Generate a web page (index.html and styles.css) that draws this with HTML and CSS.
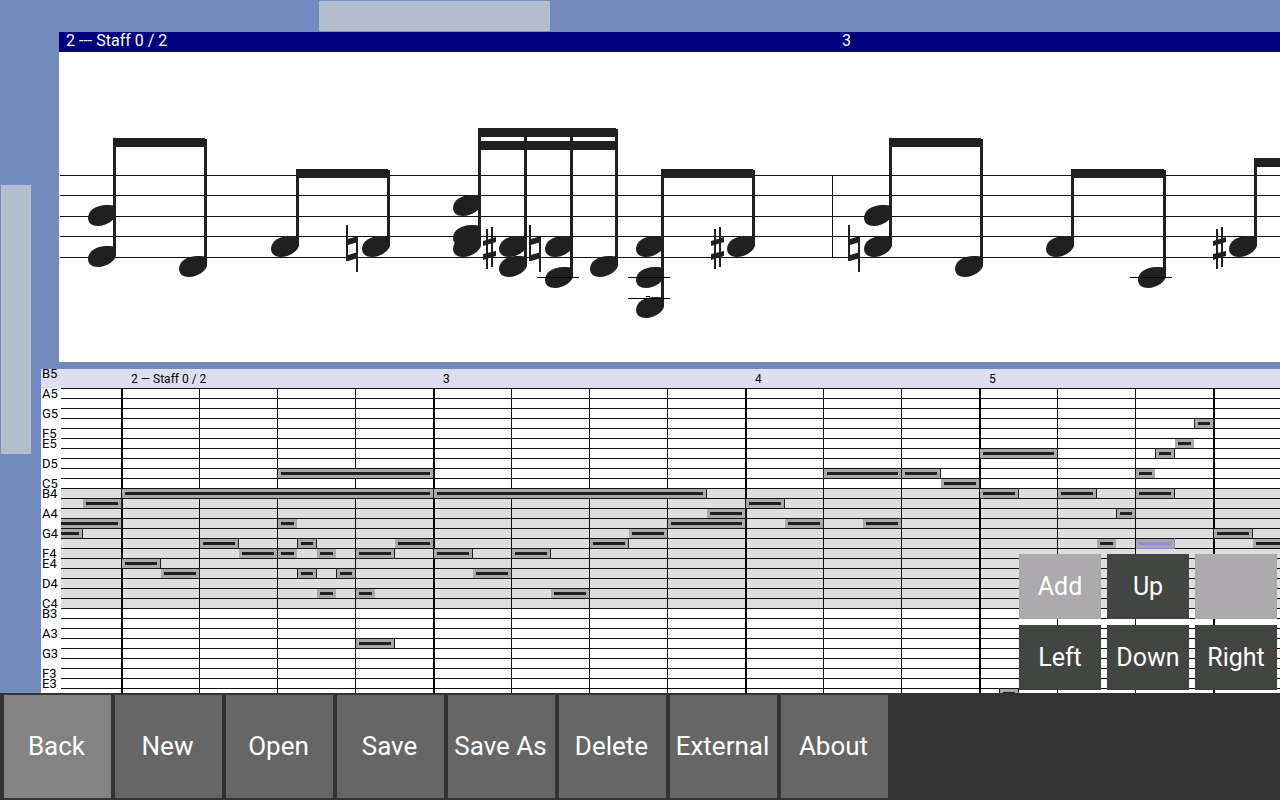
FILE: index.html
```html
<!DOCTYPE html>
<html lang="en">

<head>
  <meta charset="UTF-8">
  <meta name="viewport" content="width=device-width, initial-scale=1.0">
  <title>Score Editor</title>
  <link rel="stylesheet" href="styles.css">
</head>

<body>
  <main class="workspace">
    <input class="scroll-h" type="range" min="0" max="1000" value="304" aria-label="Scroll horizontally">
    <input class="scroll-v" type="range" min="0" max="1000" value="390" aria-label="Scroll vertically">

    <section class="score">
      <div class="score-header" id="score-header"></div>
      <svg class="score-canvas" id="score"></svg>
    </section>

    <section class="roll">
      <div class="roll-header" id="roll-header"></div>
      <ul class="keys" id="keys"></ul>
      <svg class="roll-canvas" id="roll"></svg>
    </section>

    <div class="keypad">
      <button class="pad light">Add</button>
      <button class="pad">Up</button>
      <button class="pad light" aria-label="Blank"></button>
      <button class="pad">Left</button>
      <button class="pad">Down</button>
      <button class="pad">Right</button>
    </div>
  </main>

  <nav class="toolbar">
    <button class="tool active">Back</button>
    <button class="tool">New</button>
    <button class="tool">Open</button>
    <button class="tool">Save</button>
    <button class="tool">Save As</button>
    <button class="tool">Delete</button>
    <button class="tool">External</button>
    <button class="tool">About</button>
  </nav>

  <script src="script.js"></script>
</body>

</html>
```
FILE: styles.css
```css
* {
  box-sizing: border-box;
}

body {
  margin: 0;
  height: 100vh;
  display: flex;
  flex-direction: column;
  background-color: #333333;
  font-family: Roboto, "Liberation Sans", sans-serif;
  overflow: hidden;
}

button {
  border: none;
  padding: 0;
  font-family: inherit;
  color: #FFF;
  cursor: pointer;
}

.workspace {
  position: relative;
  flex: 1;
  min-height: 0;
  display: grid;
  grid-template-columns: 41px 1fr;
  grid-template-rows: 32px auto 1fr;
  background-color: #728ABC;
}

/* scrollbars */
.scroll-h,
.scroll-v {
  appearance: none;
  margin: 0;
  background: transparent;
}

.scroll-h {
  grid-column: 1 / 3;
  width: 100%;
  height: 32px;
}

.scroll-v {
  grid-row: 2 / 4;
  writing-mode: vertical-lr;
  width: 32px;
  height: 100%;
}

.scroll-h::-webkit-slider-thumb {
  appearance: none;
  width: 231px;
  height: 30px;
  background-color: #B4BDCE;
}

.scroll-v::-webkit-slider-thumb {
  appearance: none;
  width: 30px;
  height: 269px;
  background-color: #B4BDCE;
}

/* staff view */
.score {
  margin-left: 18px;
  min-width: 0;
  background-color: #FFF;
}

.score-header {
  display: flex;
  height: 20px;
  padding-left: 7px;
  line-height: 18px;
  font-size: 16px;
  color: #FFF;
  background-color: #000080;
  overflow: hidden;
}

.score-canvas {
  display: block;
  width: 100%;
  height: 310px;
}

.measure {
  flex: none;
  white-space: pre;
}

/* piano roll */
.roll {
  margin-top: 7px;
  min-width: 0;
  min-height: 0;
  display: grid;
  grid-template-columns: 20px 1fr;
  grid-template-rows: 19px 1fr;
  background-color: #FFF;
  overflow: hidden;
}

.roll-header {
  grid-column: 1 / 3;
  grid-row: 1;
  display: flex;
  padding-left: 90px;
  line-height: 20px;
  font-size: 12px;
  color: #000;
  background-color: #DEDFEE;
  overflow: hidden;
}

.keys {
  grid-column: 1;
  grid-row: 1 / 3;
  min-height: 0;
  margin: 0;
  padding: 0 0 0 1px;
  list-style: none;
  font-size: 13px;
  line-height: 10px;
}

.keys li {
  height: 10px;
}

.roll-canvas {
  grid-column: 2;
  grid-row: 2;
  display: block;
  width: 100%;
  height: 100%;
}

.ink {
  fill: #202020;
}

.line {
  fill: #101010;
}

.bar {
  fill: #000;
}

.octave {
  fill: #DEDEDE;
}

.note {
  fill: #ABAAAB;
}

.selected .ink {
  fill: #8C8CD0;
}

/* keypad over the roll */
.keypad {
  position: absolute;
  right: 3px;
  bottom: 3px;
  display: grid;
  grid-template-columns: repeat(3, 82px);
  grid-auto-rows: 65px;
  gap: 6px;
}

.pad {
  font-size: 25px;
  background-color: #434542;
}

.pad.light {
  background-color: #ACAAAC;
}

.toolbar {
  display: flex;
  gap: 4px;
  padding: 2px 4px;
  background-color: #333333;
}

.tool {
  width: 107px;
  height: 103px;
  padding: 0 2px 2px 0;
  font-size: 26px;
  background-color: #666666;
}

.tool.active {
  background-color: #838383;
}
```
FILE: script.js
```js
const SVG = 'http://www.w3.org/2000/svg';

function add(parent, tag, attrs) {
  const el = document.createElementNS(SVG, tag);
  for (const name in attrs) el.setAttribute(name, attrs[name]);
  parent.appendChild(el);
  return el;
}

function rect(parent, cls, x, y, width, height) {
  return add(parent, 'rect', { class: cls, x: x, y: y, width: width, height: height });
}

function measures(id, list) {
  const header = document.getElementById(id);
  list.forEach(([text, width]) => {
    const span = document.createElement('span');
    span.className = 'measure';
    span.textContent = text;
    span.style.width = width + 'px';
    header.appendChild(span);
  });
}

measures('score-header', [['2 --- Staff 0 / 2', 776], ['3', 776]]);
measures('roll-header', [['2 — Staff 0 / 2', 312], ['3', 312], ['4', 234], ['5', 234]]);

// ---- staff ----
const score = document.getElementById('score');

const HEAD = 'M-25 3C-25 -5 -16 -10 -7 -10C-3 -10 1 -10 3 -9V-1C3 4 -6 11 -15 11C-21 11 -25 8 -25 3Z';
const NATURAL = 'M-41 -21h2v36h-2ZM-31 -9h2v35h-2ZM-39 -7L-29 -10v6L-39 -1ZM-39 9L-29 6v6L-39 15Z';
const SHARP = 'M-38 -17h2v40h-2ZM-33 -19h2v40h-2ZM-41 -5L-28 -9v5L-41 0ZM-41 8L-28 5v5L-41 14Z';

// stems: [x, head positions, accidental]
const groups = [
  { beams: [86], stems: [[54, [163, 204]], [145, [214]]] },
  { beams: [117], stems: [[237, [194]], [328, [194], NATURAL]] },
  { beams: [76, 89], stems: [[419, [153, 183, 194]], [465, [194, 214], SHARP], [511, [194, 225], NATURAL], [556, [214]]] },
  { beams: [117], stems: [[602, [194, 225, 255]], [693, [194], SHARP]] },
  { beams: [86], stems: [[830, [163, 194], NATURAL], [921, [214]]] },
  { beams: [117], stems: [[1012, [194]], [1104, [225]]] },
  { beams: [106], stems: [[1195, [194], SHARP], [1286, [214]]] }
];

[123, 143, 164, 184, 205].forEach(y => rect(score, 'line', 1, y, '100%', 1));
rect(score, 'line', 773, 123, 1, 83);

groups.forEach(group => {
  const first = group.stems[0][0];
  const last = group.stems[group.stems.length - 1][0];
  group.beams.forEach(y => rect(score, 'ink', first, y, last - first + 1, 9));

  group.stems.forEach(([x, heads, accidental]) => {
    const top = group.beams[0] + (x === first ? 0 : 1);
    rect(score, 'ink', x, top, 3, Math.max(...heads) - top);
    heads.forEach(y => {
      add(score, 'path', { class: 'ink', d: HEAD, transform: `translate(${x} ${y})` });
    });
    if (accidental) {
      add(score, 'path', { class: 'ink', d: accidental, transform: `translate(${x} 194)` });
    }
    // ledger lines
    const lowest = Math.max(...heads);
    if (lowest >= 225) rect(score, 'bar', x - 33, 225, 42, 1);
    if (lowest >= 246) {
      rect(score, 'bar', x - 33, 246, 42, 1);
      rect(score, 'bar', x - 15, 244, 4, 1);
    }
  });
});

// ---- piano roll ----
const roll = document.getElementById('roll');
const keys = document.getElementById('keys');
const ROW = 10;
const BEAT = 78;
const START = 60;

const names = ['B', '', 'A', '', 'G', '', 'F', 'E', '', 'D', '', 'C'];
for (let i = 0; i < 32; i++) {
  const li = document.createElement('li');
  const name = names[i % 12];
  li.textContent = name ? name + (5 - Math.floor(i / 12)) : '';
  keys.appendChild(li);
}

rect(roll, 'octave', 0, 10 * ROW, '100%', 12 * ROW);
for (let i = 0; i < 34; i++) rect(roll, 'line', 0, i * ROW, '100%', 1);
const bars = [0, 4, 8, 11, 14];
for (let i = 0; i < 16; i++) {
  const isBar = bars.includes(i);
  rect(roll, isBar ? 'bar' : 'line', START + i * BEAT, 0, isBar ? 2 : 1, '100%');
}

// [row, first sixteenth, last sixteenth]
const notes = [
  [11, -2, 0], [13, -8, 0], [14, -8, -2],
  [10, 0, 16], [17, 0, 2], [18, 2, 4], [15, 4, 6], [16, 6, 8],
  [8, 8, 16], [13, 8, 9], [16, 8, 9], [15, 9, 10], [18, 9, 10],
  [16, 10, 11], [20, 10, 11], [18, 11, 12],
  [16, 12, 14], [20, 12, 13], [25, 12, 14], [15, 14, 16],
  [10, 16, 30], [16, 16, 18], [18, 18, 20], [16, 20, 22], [20, 22, 24],
  [15, 24, 26], [14, 26, 28], [13, 28, 32], [12, 30, 32],
  [11, 32, 34], [13, 34, 36], [8, 36, 40], [13, 38, 40], [8, 40, 42], [9, 42, 44],
  [6, 44, 48], [10, 44, 46], [30, 45, 46], [10, 48, 50], [15, 50, 51], [12, 51, 52],
  [10, 52, 54], [15, 52, 54, true], [8, 52, 53], [6, 53, 54], [5, 54, 55], [3, 55, 56],
  [14, 56, 58], [15, 58, 60]
];

notes.forEach(([row, from, to, selected]) => {
  const x1 = Math.ceil(START + from * BEAT / 4);
  const x2 = Math.ceil(START + to * BEAT / 4);
  const y = row * ROW;
  const g = add(roll, 'g', selected ? { class: 'selected' } : {});
  rect(g, 'note', x1 + 1, y + 1, x2 - x1 - 1, 9);
  rect(g, 'ink', x1 + 4, y + 4, x2 - x1 - 7, 3);
  if (from % 2) rect(g, 'ink', x1, y, 1, 11);
  if (to % 2 === 0) rect(g, 'ink', x2, y, 1, 11);
  if (selected) rect(g, 'ink', x1 + 1, y + 10, x2 - x1, 1);
});
```
